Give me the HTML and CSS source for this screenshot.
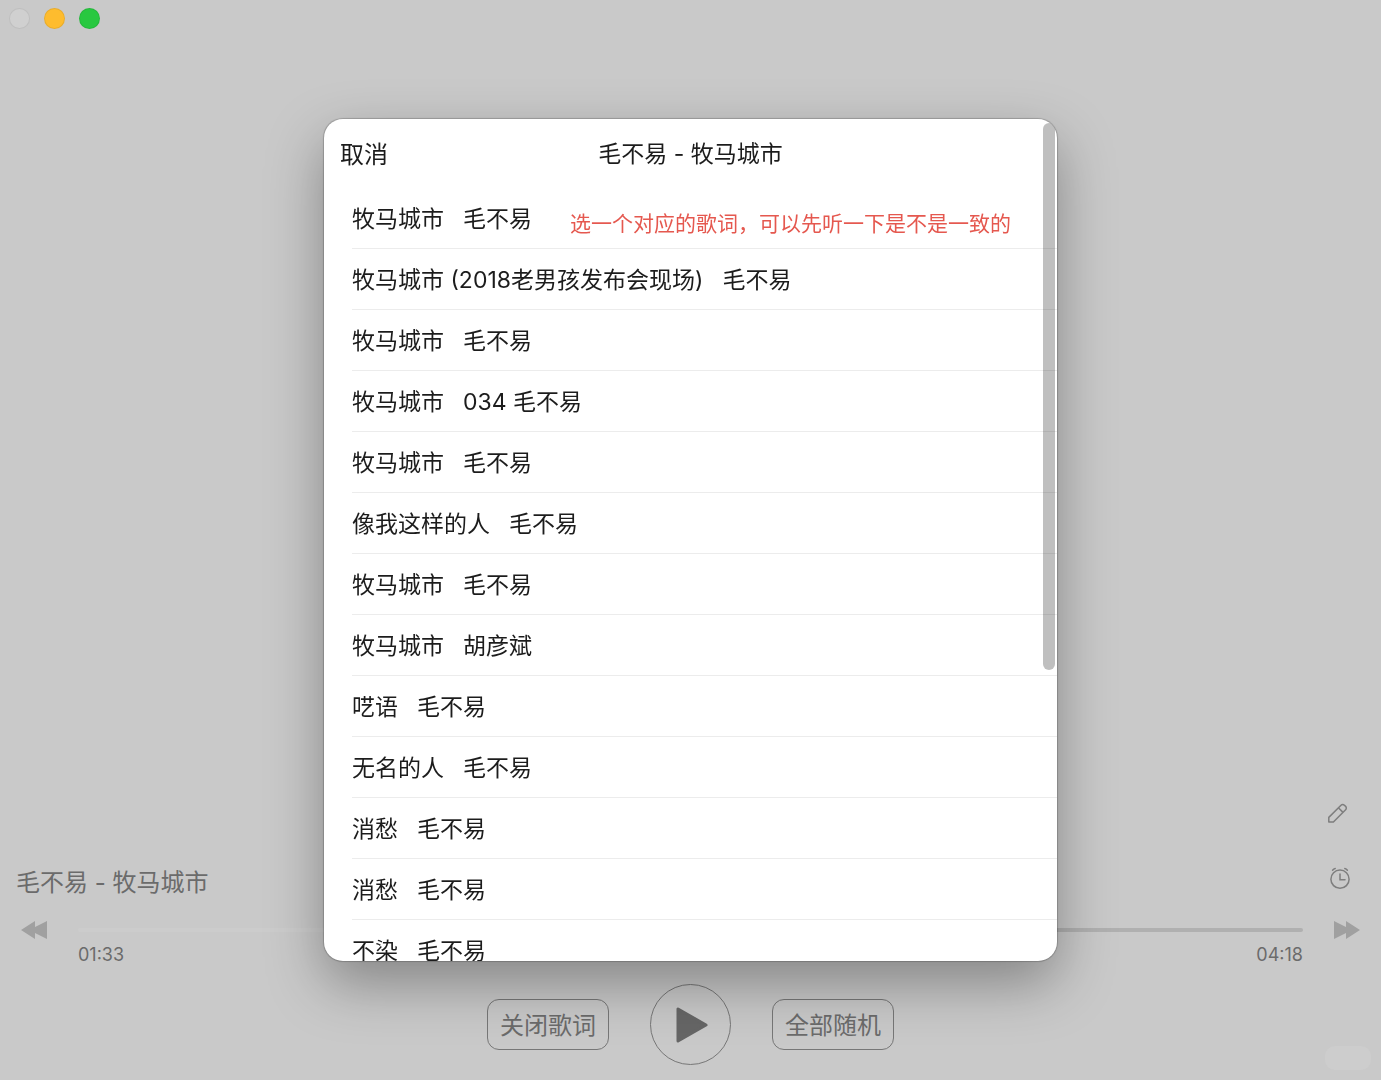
FILE: index.html
```html
<!DOCTYPE html>
<html lang="zh-CN">
<head>
    <meta charset="UTF-8">
    <meta name="viewport" content="width=device-width, initial-scale=1.0">
    <title>毛不易 - 牧马城市</title>
    <link rel="stylesheet" href="styles.css">
</head>
<body>
    <header class="titlebar">
        <button class="light light-close" aria-label="关闭"></button>
        <button class="light light-min" aria-label="最小化"></button>
        <button class="light light-max" aria-label="全屏"></button>
    </header>

    <main class="player">
        <div class="song-row">
            <h1 class="song-title">毛不易 - 牧马城市</h1>
            <div class="tools">
                <button class="icon-btn" aria-label="编辑">
                    <svg width="32" height="32" viewBox="0 0 32 32" fill="none" stroke="#7e7e7e" stroke-width="1.5" stroke-linejoin="round">
                        <path d="M5.8 25v-4.6L18 8.2a2.4 2.4 0 0 1 3.4 0l1.2 1.2a2.4 2.4 0 0 1 0 3.4L10.4 25z"/>
                        <path d="M15.4 10.8l4.6 4.6"/>
                    </svg>
                </button>
                <button class="icon-btn" aria-label="定时">
                    <svg width="32" height="32" viewBox="0 0 32 32" fill="none" stroke="#7e7e7e" stroke-width="1.5" stroke-linecap="round">
                        <circle cx="17" cy="17.2" r="9.1"/>
                        <path d="M17 12v5.8h5M9.6 8.2q1-1.3 2.6-1.6M24.4 8.2q-1-1.3-2.6-1.6"/>
                    </svg>
                </button>
            </div>
        </div>

        <div class="progress">
            <button class="skip-btn" aria-label="上一首">
                <svg width="26" height="18" viewBox="0 0 26 18" fill="#a0a0a0">
                    <path d="M0 9L14 0v6L26 0v18l-12-6v6z"/>
                </svg>
            </button>
            <input type="range" class="seek" min="0" max="258" value="93" aria-label="播放进度">
            <button class="skip-btn" aria-label="下一首">
                <svg width="26" height="18" viewBox="0 0 26 18" fill="#a0a0a0">
                    <path d="M26 9L12 0v6L0 0v18l12-6v6z"/>
                </svg>
            </button>
            <div class="times">
                <span>01:33</span>
                <span>04:18</span>
            </div>
        </div>

        <div class="controls">
            <button class="text-btn">关闭歌词</button>
            <button class="play-btn" aria-label="播放">
                <svg width="36" height="38" viewBox="0 0 36 38" fill="#666" stroke="#666" stroke-width="3" stroke-linejoin="round">
                    <path d="M5 3v32L33 19z"/>
                </svg>
            </button>
            <button class="text-btn">全部随机</button>
        </div>
        <div class="badge"></div>
    </main>

    <div class="overlay">
        <section class="sheet" role="dialog" aria-labelledby="sheetTitle">
            <div class="sheet-header">
                <button class="cancel-btn">取消</button>
                <h2 id="sheetTitle" class="sheet-title">毛不易 - 牧马城市</h2>
            </div>
            <ul class="lyric-list">
                <li><button class="lyric-item"><span>牧马城市</span><span>毛不易</span></button></li>
                <li><button class="lyric-item"><span>牧马城市 (2018老男孩发布会现场)</span><span>毛不易</span></button></li>
                <li><button class="lyric-item"><span>牧马城市</span><span>毛不易</span></button></li>
                <li><button class="lyric-item"><span>牧马城市</span><span>034 毛不易</span></button></li>
                <li><button class="lyric-item"><span>牧马城市</span><span>毛不易</span></button></li>
                <li><button class="lyric-item"><span>像我这样的人</span><span>毛不易</span></button></li>
                <li><button class="lyric-item"><span>牧马城市</span><span>毛不易</span></button></li>
                <li><button class="lyric-item"><span>牧马城市</span><span>胡彦斌</span></button></li>
                <li><button class="lyric-item"><span>呓语</span><span>毛不易</span></button></li>
                <li><button class="lyric-item"><span>无名的人</span><span>毛不易</span></button></li>
                <li><button class="lyric-item"><span>消愁</span><span>毛不易</span></button></li>
                <li><button class="lyric-item"><span>消愁</span><span>毛不易</span></button></li>
                <li><button class="lyric-item"><span>不染</span><span>毛不易</span></button></li>
            </ul>
            <p class="hint">选一个对应的歌词，可以先听一下是不是一致的</p>
            <div class="scroll-thumb"></div>
        </section>
    </div>
</body>
</html>
```
FILE: styles.css
```css
:root {
    --bg-color: #c9c9c9;
    --dim-text: #6b6b6b;
    --text-color: #1c1c1c;
    --line-color: #ececec;
    --hint-color: #e5584f;
}

* {
    margin: 0;
    padding: 0;
    box-sizing: border-box;
    font-family: Inter, 'Noto Sans CJK SC', sans-serif;
}

body {
    display: flex;
    flex-direction: column;
    min-height: 100vh;
    background-color: var(--bg-color);
    color: var(--dim-text);
}

button {
    border: none;
    background: none;
    color: inherit;
    cursor: pointer;
}

h1,
h2 {
    font-weight: 400;
}

.titlebar {
    display: flex;
    gap: 14px;
    padding: 8px 9px;
}

.light {
    width: 21px;
    height: 21px;
    border-radius: 50%;
    border: 1px solid rgba(0, 0, 0, 0.08);
}

.light-close {
    background-color: #d0d0d0;
}

.light-min {
    background-color: #febc2e;
}

.light-max {
    background-color: #28c840;
}

.player {
    position: relative;
    margin-top: auto;
    padding: 0 16px 15px;
}

.song-row {
    display: flex;
    justify-content: space-between;
    align-items: flex-end;
    margin-bottom: 13px;
}

.song-title {
    font-size: 24px;
    line-height: 36px;
}

.tools {
    display: flex;
    flex-direction: column;
    gap: 33px;
    padding: 0 10px 7px 0;
}

.icon-btn,
.icon-btn svg {
    display: block;
    width: 32px;
    height: 32px;
}

.progress {
    display: grid;
    grid-template-columns: 36px 1fr 36px;
    column-gap: 26px;
    align-items: center;
}

.skip-btn {
    display: flex;
    align-items: center;
    justify-content: center;
    height: 32px;
}

.seek {
    appearance: none;
    width: 100%;
    height: 4px;
    border-radius: 2px;
    background: linear-gradient(to right, #cccccc 36%, #b0b0b0 36%);
}

.seek::-webkit-slider-thumb {
    appearance: none;
    width: 4px;
    height: 4px;
}

.times {
    grid-column: 2;
    display: flex;
    justify-content: space-between;
    font-size: 18px;
    line-height: 18px;
}

.controls {
    display: flex;
    justify-content: center;
    align-items: center;
    gap: 41px;
    margin-top: 20px;
}

.text-btn {
    height: 51px;
    padding: 0 12px 2px;
    border: 1px solid #777;
    border-radius: 12px;
    font-size: 24px;
}

.play-btn {
    display: flex;
    align-items: center;
    justify-content: center;
    width: 81px;
    height: 81px;
    border: 1px solid #777;
    border-radius: 50%;
}

.badge {
    position: absolute;
    right: 10px;
    bottom: 10px;
    width: 46px;
    height: 24px;
    border-radius: 10px;
    background-color: #cdcdcd;
}

.overlay {
    position: fixed;
    inset: 0;
    display: flex;
    align-items: center;
    justify-content: center;
}

.sheet {
    position: relative;
    width: 90%;
    max-width: 733px;
    max-height: 78vh;
    overflow: hidden;
    border-radius: 19px;
    background-color: #fff;
    color: var(--text-color);
    box-shadow: 0 0 1px 1px rgba(0, 0, 0, 0.2), 0 22px 56px rgba(0, 0, 0, 0.34);
}

.sheet-header {
    display: grid;
    grid-template-columns: 1fr auto 1fr;
    align-items: center;
    height: 69px;
    padding: 0 16px 2px;
}

.cancel-btn {
    justify-self: start;
    font-size: 24px;
}

.sheet-title {
    font-size: 23px;
}

.lyric-list {
    list-style: none;
    padding-left: 28px;
}

.lyric-item {
    display: flex;
    align-items: center;
    gap: 19px;
    width: 100%;
    height: 61px;
    padding-bottom: 2px;
    border-bottom: 1px solid var(--line-color);
    font-size: 23px;
    text-align: left;
}

.hint {
    position: absolute;
    top: 90px;
    left: 246px;
    color: var(--hint-color);
    font-size: 21px;
    line-height: 30px;
}

.scroll-thumb {
    position: absolute;
    top: 4px;
    right: 2px;
    width: 12px;
    height: 65%;
    border-radius: 6px;
    background-color: rgba(0, 0, 0, 0.25);
}
```
